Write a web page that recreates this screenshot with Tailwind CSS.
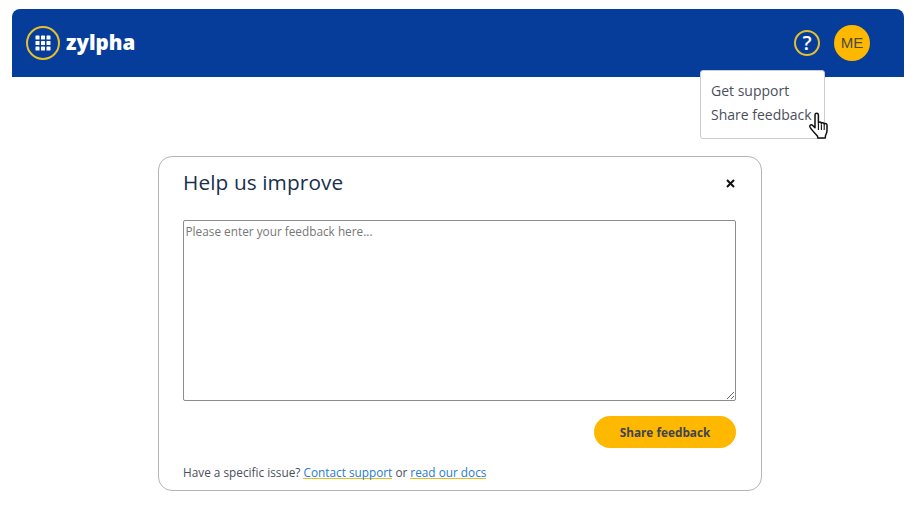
<!DOCTYPE html>
<html lang="en">
<head>
    <meta charset="UTF-8">
    <meta name="viewport" content="width=device-width, initial-scale=1.0">
    <title>Help us improve</title>
    <script src="https://cdn.jsdelivr.net/npm/@tailwindcss/browser@4"></script>
</head>
<body class="bg-white font-['Open_Sans',sans-serif] overflow-hidden">
    <div class="relative w-[920px] h-[508px] px-[12px] pt-[9px]">

        <!-- header -->
        <header class="w-[892px] h-[68px] bg-[#063d9b] rounded-t-[8px] flex items-center pl-[14px] pr-[34px]">
            <div class="w-[34px] h-[34px] rounded-full border-2 border-[#e5c02e] flex items-center justify-center">
                <svg width="16" height="16" viewBox="0 0 16 16" fill="#fff">
                    <rect x="0.5" y="0.5" width="4" height="4" rx="0.6"/><rect x="6" y="0.5" width="4" height="4" rx="0.6"/><rect x="11.5" y="0.5" width="4" height="4" rx="0.6"/>
                    <rect x="0.5" y="6" width="4" height="4" rx="0.6"/><rect x="6" y="6" width="4" height="4" rx="0.6"/><rect x="11.5" y="6" width="4" height="4" rx="0.6"/>
                    <rect x="0.5" y="11.5" width="4" height="4" rx="0.6"/><rect x="6" y="11.5" width="4" height="4" rx="0.6"/><rect x="11.5" y="11.5" width="4" height="4" rx="0.6"/>
                </svg>
            </div>
            <span class="ml-[6px] text-white text-[20.5px] font-extrabold leading-none -mt-[2px]">zylpha</span>
            <div class="ml-auto flex items-center gap-[14px]">
                <div class="w-[26px] h-[26px] rounded-full border-2 border-[#e5c02e] flex items-center justify-center text-white text-[20px] font-semibold leading-none">?</div>
                <div class="w-[36px] h-[36px] rounded-full bg-[#ffb800] flex items-center justify-center text-[#4a4a45] text-[15px] font-['Liberation_Sans',sans-serif]">ME</div>
            </div>
        </header>

        <!-- dropdown -->
        <div class="absolute left-[700px] top-[70px] w-[125px] h-[69px] bg-white border border-[#c9cbd2] rounded-[3px] pl-[10px] pt-[8px] text-[14px] leading-[24px] text-[#4a4f5c]">
            <p>Get support</p>
            <p>Share feedback</p>
        </div>

        <!-- cursor -->
        <svg class="absolute left-[808px] top-[112px]" width="22" height="28" viewBox="0 0 22 28">
            <path d="M7 3c0-2.2 3.4-2.2 3.4 0v8.2c0-1.6 3-1.6 3 .2v.4c0-1.5 2.8-1.5 2.8.3v.5c0-1.4 2.8-1.4 2.8.5v5.4c0 2.4-1 3.6-1.5 5.2l-.2 2.3H9.8l-.3-1.9c-1.6-1.8-5.2-5.6-7.4-8.8-1.1-1.7.9-3.3 2.4-2l2.5 2.5V3z" fill="#fff" stroke="#111" stroke-width="1.5" stroke-linejoin="round"/>
            <path d="M10.4 12v6M13.4 12.5v5.5M16.2 13v5" stroke="#111" stroke-width="1.1" fill="none"/>
        </svg>

        <!-- feedback card -->
        <main class="mt-[79px] ml-[146px] w-[604px] h-[335px] border border-[#b5b5b5] rounded-[14px] bg-white px-[24px]">
            <div class="flex items-center justify-between h-[52px] pr-[1px]">
                <h1 class="text-[20.8px] leading-none text-[#17304d] -mt-[2px] tracking-[0.1px]">Help us improve</h1>
                <svg class="mr-[1px] mt-[1px]" width="9" height="9" viewBox="0 0 9 9">
                    <path d="M1 1l7 7M8 1l-7 7" stroke="#111" stroke-width="2"/>
                </svg>
            </div>
            <textarea class="block mt-[11px] w-[553px] h-[181px] border border-[#8d8d8d] rounded-[2px] px-[1.5px] py-[2px] text-[11.8px] leading-[16px] text-[#333] placeholder:text-[#777] outline-none" placeholder="Please enter your feedback here..."></textarea>
            <div class="flex justify-end mt-[15px] w-[553px]">
                <button class="w-[142px] h-[32px] pt-[1px] rounded-full bg-[#ffb800] text-[#3d4350] text-[11.8px] font-bold">Share feedback</button>
            </div>
            <p class="mt-[15px] text-[11.8px] leading-[18px] text-[#4a4f5c]">Have a specific issue? <a href="#" class="text-[#2a7bc8] bg-[linear-gradient(#e8bd20,#e8bd20)] bg-no-repeat bg-[length:100%_1px] bg-[position:0_14px]">Contact support</a> or <a href="#" class="text-[#2a7bc8] bg-[linear-gradient(#e8bd20,#e8bd20)] bg-no-repeat bg-[length:100%_1px] bg-[position:0_14px]">read our docs</a></p>
        </main>
    </div>
</body>
</html>
